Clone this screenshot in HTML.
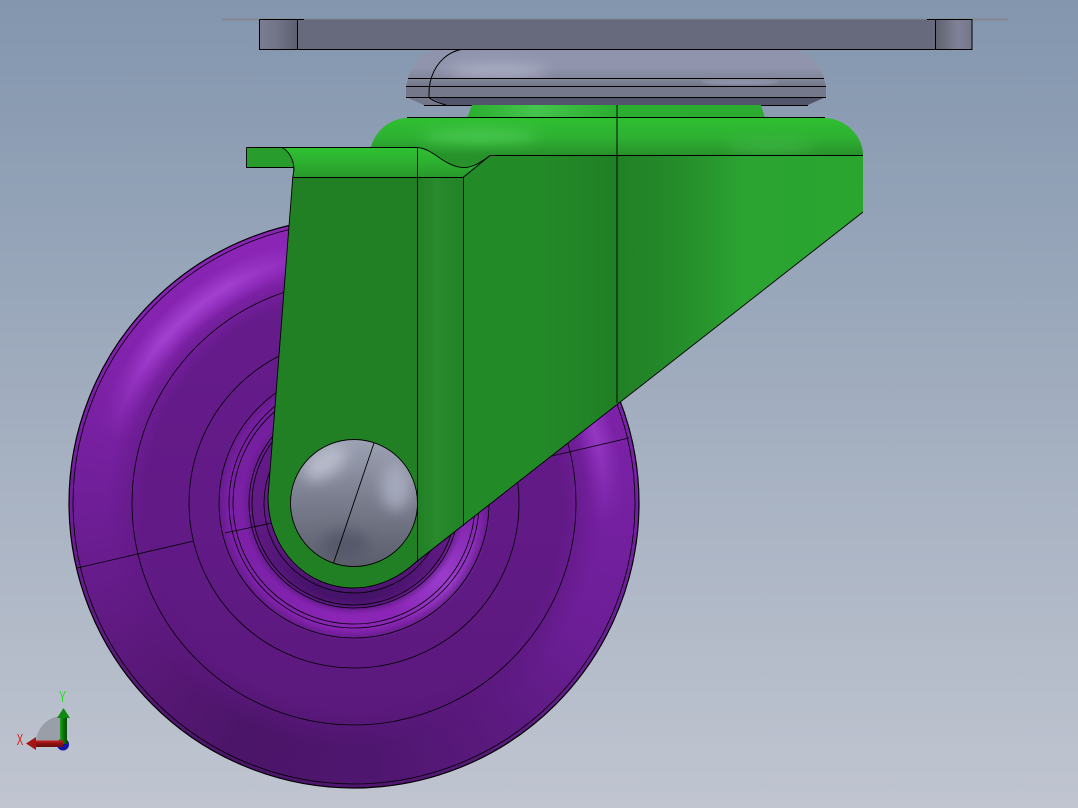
<!DOCTYPE html>
<html><head><meta charset="utf-8"><style>
html,body{margin:0;padding:0;width:1078px;height:808px;overflow:hidden}
body{position:relative;background:linear-gradient(180deg,#8396ae,#c0c5d0)}
svg{display:block;position:absolute;left:0;top:0}
.w{position:absolute;left:69px;top:218px;width:570px;height:570px;border-radius:50%}
#w0{background:linear-gradient(180deg,#681c8e,#611a85 60%,#581878)}
#w1{background:conic-gradient(#8a25b5 0deg,#8a25b5 20deg,#8c2cbc 45deg,#7c22a8 70deg,#7420a0 95deg,#6c1e96 120deg,#5c1a80 145deg,#4f166f 175deg,#4b1569 205deg,#561773 225deg,#641b88 250deg,#721f9b 275deg,#8323ae 305deg,#8a25b5 335deg,#8a25b5 360deg);
-webkit-mask-image:radial-gradient(circle at center,transparent 208px,#000 246px,#000 285px);mask-image:radial-gradient(circle at center,transparent 208px,#000 246px,#000 285px)}
#w2{background:conic-gradient(#a23fd000 0deg,#a23fd000 285deg,#a240d0 310deg,#a240d0 330deg,#a23fd000 352deg),conic-gradient(#9437c200 45deg,#9437c2 65deg,#9437c2 75deg,#9437c200 95deg);
-webkit-mask-image:radial-gradient(circle at center,transparent 232px,#000 251px,transparent 270px);mask-image:radial-gradient(circle at center,transparent 232px,#000 251px,transparent 270px)}
#h1{background:conic-gradient(#6d1e98 0deg,#7c21a8 90deg,#9a3ccb 130deg,#8a25b5 160deg,#8a25b5 190deg,#7e22ab 225deg,#7a20a5 270deg,#6d1e98 360deg);
-webkit-mask-image:radial-gradient(circle at center,transparent 101px,#000 112px,#000 126px,transparent 138px);mask-image:radial-gradient(circle at center,transparent 101px,#000 112px,#000 126px,transparent 138px)}
#h2{background:conic-gradient(#46136a00 0deg,#46136a00 110deg,#46136a 165deg,#46136a 205deg,#46136a00 260deg);
-webkit-mask-image:radial-gradient(circle at center,transparent 80px,#000 90px,#000 96px,transparent 108px);mask-image:radial-gradient(circle at center,transparent 80px,#000 90px,#000 96px,transparent 108px)}
</style></head><body>
<div class="w" id="w0"></div><div class="w" id="w1"></div><div class="w" id="w2"></div><div class="w" id="h1"></div><div class="w" id="h2"></div>
<svg width="1078" height="808" viewBox="0 0 1078 808" xmlns="http://www.w3.org/2000/svg">
<defs>
<filter id="b8" filterUnits="userSpaceOnUse" x="0" y="0" width="1078" height="808"><feGaussianBlur stdDeviation="7"/></filter>
<filter id="b1" filterUnits="userSpaceOnUse" x="0" y="0" width="1078" height="808"><feGaussianBlur stdDeviation="1.5"/></filter>
<clipPath id="bc"><circle cx="354" cy="503" r="63.5"/></clipPath>
<clipPath id="fc"><path d="M293 177L268 497C268 548 305 588 354 588C378 588 400 577 416 562L463 525V177Z"/></clipPath>
<clipPath id="dc"><path d="M433 50H797C810 55 820 66 824 78L826 87V97L808 105H424L406 97V87L408 78C412 66 420 55 433 50Z"/></clipPath>
<clipPath id="tc"><path d="M371 147C376 130 390 119 407 118H825C846 119 863 136 863 155H490L480 162L465 167L453 166L437 155L423 148L417 147Z"/></clipPath>
<linearGradient id="pe1" x1="0" x2="1" y1="0" y2="0"><stop offset="0" stop-color="#7a7d90"/><stop offset=".4" stop-color="#73768a"/><stop offset="1" stop-color="#5d606f"/></linearGradient>
<linearGradient id="pe2" x1="0" x2="1" y1="0" y2="0"><stop offset="0" stop-color="#5e616f"/><stop offset=".6" stop-color="#7f8296"/><stop offset="1" stop-color="#74778a"/></linearGradient>
<linearGradient id="dome" x1="0" y1="50" x2="0" y2="79" gradientUnits="userSpaceOnUse"><stop offset="0" stop-color="#8f93ab"/><stop offset=".6" stop-color="#9094ac"/><stop offset="1" stop-color="#82869b"/></linearGradient>
<linearGradient id="band1" x1="0" y1="79" x2="0" y2="87" gradientUnits="userSpaceOnUse"><stop offset="0" stop-color="#83879b"/><stop offset="1" stop-color="#6f7385"/></linearGradient>
<linearGradient id="face" x1="463" x2="863" y1="0" y2="0" gradientUnits="userSpaceOnUse"><stop offset="0" stop-color="#238a28"/><stop offset=".2" stop-color="#238a28"/><stop offset=".38" stop-color="#208024"/><stop offset=".5" stop-color="#24892a"/><stop offset=".6" stop-color="#27942c"/><stop offset=".7" stop-color="#2ba432"/><stop offset="1" stop-color="#2aa52e"/></linearGradient>
<linearGradient id="top" x1="0" y1="118" x2="0" y2="155" gradientUnits="userSpaceOnUse"><stop offset="0" stop-color="#2fbf31"/><stop offset=".55" stop-color="#2eb032"/><stop offset="1" stop-color="#27922a"/></linearGradient>
<linearGradient id="band" x1="0" y1="147" x2="0" y2="177" gradientUnits="userSpaceOnUse"><stop offset="0" stop-color="#2fc232"/><stop offset=".5" stop-color="#2db030"/><stop offset="1" stop-color="#289a2b"/></linearGradient>
<linearGradient id="neck" x1="470" x2="765" y1="0" y2="0" gradientUnits="userSpaceOnUse"><stop offset="0" stop-color="#2cae30"/><stop offset=".22" stop-color="#44c44c"/><stop offset=".5" stop-color="#2bae2f"/><stop offset="1" stop-color="#2bab2f"/></linearGradient>
<linearGradient id="strip" x1="417" x2="463" y1="0" y2="0" gradientUnits="userSpaceOnUse"><stop offset="0" stop-color="#217f24"/><stop offset=".45" stop-color="#288b2d"/><stop offset=".65" stop-color="#25862a"/><stop offset="1" stop-color="#228426"/></linearGradient>
<linearGradient id="bolt" x1="0" y1="0" x2="0" y2="1"><stop offset="0" stop-color="#9da2b4"/><stop offset=".45" stop-color="#7b7f8f"/><stop offset="1" stop-color="#5b5e6c"/></linearGradient>
<linearGradient id="xarr" x1="0" y1="0" x2="0" y2="1"><stop offset="0" stop-color="#d02020"/><stop offset=".5" stop-color="#8a1010"/><stop offset="1" stop-color="#6a1010"/></linearGradient>
<linearGradient id="yarr" x1="0" y1="0" x2="1" y2="0"><stop offset="0" stop-color="#20a020"/><stop offset=".5" stop-color="#0b700b"/><stop offset="1" stop-color="#085008"/></linearGradient>
</defs>

<!-- wheel lines -->
<g fill="none" stroke="#000" stroke-width=".8">
  <circle cx="354" cy="503" r="285" stroke-width="1.2"/>
  <circle cx="354" cy="503" r="281"/>
  <circle cx="354" cy="503" r="222"/>
  <circle cx="354" cy="503" r="165"/>
  <circle cx="354" cy="503" r="135"/>
  <circle cx="354" cy="503" r="125"/>
  <circle cx="354" cy="503" r="121"/>
  <circle cx="354" cy="503" r="105"/>
  <circle cx="354" cy="503" r="102"/>
  <circle cx="354" cy="503" r="90"/>
  <path d="M77 568L194 541M225 533L272 523M552 456L629 438"/>
</g>

<!-- plate -->
<rect x="222" y="18.500" width="786" height="2" fill="#84878f"/>
<rect x="259.500" y="19.500" width="712.500" height="30" fill="#666a7c"/>
<rect x="260" y="20" width="37.500" height="29" fill="url(#pe1)"/>
<rect x="935.500" y="20" width="36.500" height="29" fill="url(#pe2)"/>
<path d="M259.500 19.500H304M927 19.500H972V49.500H259.500V19.500M297.500 19.500V49.500M935.500 19.500V49.500" fill="none" stroke="#000"/>

<!-- dome -->
<path d="M433 50H797C810 55 820 66 824 78L826 87V97L808 105H424L406 97V87L408 78C412 66 420 55 433 50Z" fill="url(#dome)"/>
<g clip-path="url(#dc)">
  <ellipse cx="497" cy="71" rx="50" ry="6" fill="#b0b4ca" filter="url(#b8)"/>
  <rect x="406" y="79" width="420" height="8" fill="url(#band1)"/>
  <ellipse cx="740" cy="82" rx="38" ry="3" fill="#9094aa" filter="url(#b1)"/>
  <path d="M406 87H826V97H406Z" fill="#74788a"/>
  <path d="M406 97H826L808 105H424Z" fill="#51546a"/>
  <path d="M406 97L424 105H446L429 97Z" fill="#74778a"/>
</g>
<path d="M408 78.500H824M406 86.500H826M406 97.500H826M424 105.500H808" fill="none" stroke="#000"/>
<path d="M461 49.500C448 52 437 62 432 76C429 84 429 90 429 97.500C433 101 439 103 446 105" fill="none" stroke="#000"/>

<!-- bracket -->
<path d="M472 105H761L765 118H467Z" fill="url(#neck)"/>
<path d="M407 118H825C846 119 863 136 863 157V212L416 562C400 577 378 588 354 588C305 588 268 548 268 497L293 177V147H371C376 130 390 119 407 118Z" fill="url(#face)"/>
<path d="M371 147C376 130 390 119 407 118H825C846 119 863 136 863 155H490L480 162L465 167L453 166L437 155L423 148L417 147Z" fill="url(#top)"/>
<g clip-path="url(#tc)">
  <ellipse cx="480" cy="136" rx="58" ry="5" fill="#52d05c" filter="url(#b8)"/>
  <ellipse cx="770" cy="146" rx="45" ry="4.500" fill="#42b848" filter="url(#b8)"/>
</g>
<path d="M293 177L268 497C268 548 305 588 354 588C378 588 400 577 416 562L463 525V177Z" fill="#228024"/>
<g clip-path="url(#fc)"><rect x="417" y="177" width="46" height="400" fill="url(#strip)"/></g>
<path d="M282 147H417L423 148L437 155L453 166L465 167L480 162L490 155L463 177H294V167Z" fill="url(#band)"/>
<path d="M247 147H282C289 151 293 159 294 167H247Z" fill="#289c2c"/>
<g fill="none" stroke="#000" stroke-width=".9">
  <path d="M407 117.500H825"/>
  <path d="M246.500 147.500H417C425 148 431 152 437 156C445 162 455 168 465 167.500C475 167 483 160 490.500 155.500H863"/>
  <path d="M246.500 147.500V167.500H294"/>
  <path d="M282 147.500C289 151 294 160 294 170L292.800 177L268 497C268 548 305 588 354 588C378 588 400 577 416 562L863 212"/>
  <path d="M293 177.500H463L490 155.500"/>
  <path d="M417.500 147V562M463.500 177V526M617 105V403"/>
</g>

<!-- bolt -->
<circle cx="354" cy="503" r="63.500" fill="url(#bolt)"/>
<g clip-path="url(#bc)">
  <ellipse cx="325" cy="462" rx="24" ry="14" fill="#b6bac9" filter="url(#b8)" transform="rotate(-35 325 462)"/>
  <ellipse cx="396" cy="486" rx="15" ry="24" fill="#a4a8bb" filter="url(#b8)"/>
  <ellipse cx="345" cy="545" rx="24" ry="14" fill="#55586a" filter="url(#b8)"/>
</g>
<circle cx="354" cy="503" r="63.500" fill="none" stroke="#000" stroke-width=".9"/>
<path d="M374 443L333.500 563" fill="none" stroke="#000" stroke-width=".9"/>

<!-- triad -->
<path d="M63 743V716A27 27 0 0 0 36 743Z" fill="#9a9ea9"/>
<circle cx="63" cy="744.500" r="6" fill="#1015a8"/>
<path d="M60 718H67V744H60Z" fill="url(#yarr)"/>
<path d="M57 718L63.500 708L70 718Z" fill="#0f8a10"/>
<path d="M36 740.500H63V747H36Z" fill="url(#xarr)"/>
<path d="M26 743.500L36 737V750Z" fill="#a51515"/>
<text transform="translate(62.500 702) scale(.65 1)" font-family="'Liberation Sans',sans-serif" font-size="16" fill="#22e022" text-anchor="middle">Y</text>
<text transform="translate(20 745) scale(.6 1)" font-family="'Liberation Sans',sans-serif" font-size="16" fill="#e01818" text-anchor="middle">X</text>
</svg>
</body></html>
